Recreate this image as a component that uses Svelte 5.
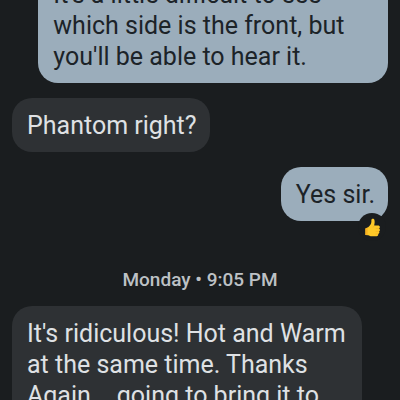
<script lang="ts">
    interface Message {
        id: number;
        sent: boolean;
        text: string;
        liked?: boolean;
    }

    const earlier: Message[] = [
        {
            id: 1,
            sent: true,
            text: "It's a little difficult to see which side is the front, but you'll be able to hear it.",
        },
        { id: 2, sent: false, text: "Phantom right?" },
        { id: 3, sent: true, text: "Yes sir.", liked: true },
    ];

    const monday: Message[] = [
        {
            id: 4,
            sent: false,
            text: "It's ridiculous! Hot and Warm at the same time. Thanks Again... going to bring it to",
        },
    ];
</script>

{#snippet bubble(message: Message)}
    <div class="bubble" class:sent={message.sent}>
        {message.text}
        {#if message.liked}
            <span class="reaction">
                <svg viewBox="0 0 18 20" role="img" aria-label="Thumbs up">
                    <path
                        fill="#ffc928"
                        d="M1.5 11 4.4 9.8C6.4 8.2 7.6 6.2 7.8 4.2L7.8 2.4C8 .4 10.6.3 11.1 2.2 11.5 4.2 11.2 6 10.7 8H14.7C17.2 8 17.3 10.5 16 11 17.3 11.7 17.1 13.8 15.9 14.1 16.8 15 16.2 16.7 15 16.9 15.4 18.1 14.6 19.2 13.4 19.2H8.4C6.6 19.2 5.8 18.4 4.4 18.1L1.5 17.9Z"
                    />
                    <path fill="#f8b022" d="M1.5 11 3.8 10V18L1.5 17.9Z" />
                    <path
                        fill="none"
                        stroke="#f2aa20"
                        stroke-width=".6"
                        d="M12.4 11H16M12.4 14.1H15.9M12.2 16.9H15M10.7 8 9.6 10"
                    />
                </svg>
            </span>
        {/if}
    </div>
{/snippet}

<main class="thread">
    {#each earlier as message (message.id)}
        {@render bubble(message)}
    {/each}
    <time class="divider">Monday • 9:05 PM</time>
    {#each monday as message (message.id)}
        {@render bubble(message)}
    {/each}
</main>

<style>
    :global(body) {
        background: #1a1d1f;
        overflow: hidden;
    }

    .thread {
        display: flex;
        flex-direction: column;
        align-items: flex-start;
        gap: 15px;
        margin-top: -33px;
        padding: 0 12px;
        font-family: Roboto, "Liberation Sans", sans-serif;
    }

    .bubble {
        position: relative;
        box-sizing: border-box;
        max-width: 93%;
        padding: 12px 13px 11px 15px;
        border-radius: 20px;
        background: #2e3134;
        color: #dfe1e4;
        font-size: 25px;
        line-height: 31px;
    }

    .bubble.sent {
        align-self: flex-end;
        background: #9badbb;
        color: #1c2328;
    }

    .reaction {
        position: absolute;
        right: 2px;
        bottom: -20px;
        display: flex;
        align-items: center;
        justify-content: center;
        width: 28px;
        height: 28px;
        border-radius: 50%;
        background: #1a1d1f;
    }

    .reaction svg {
        width: 17px;
        height: 19px;
    }

    .divider {
        align-self: center;
        margin: 33px 0 0;
        color: #bdc1c5;
        font-size: 19px;
        font-weight: 500;
        line-height: 22px;
    }
</style>
